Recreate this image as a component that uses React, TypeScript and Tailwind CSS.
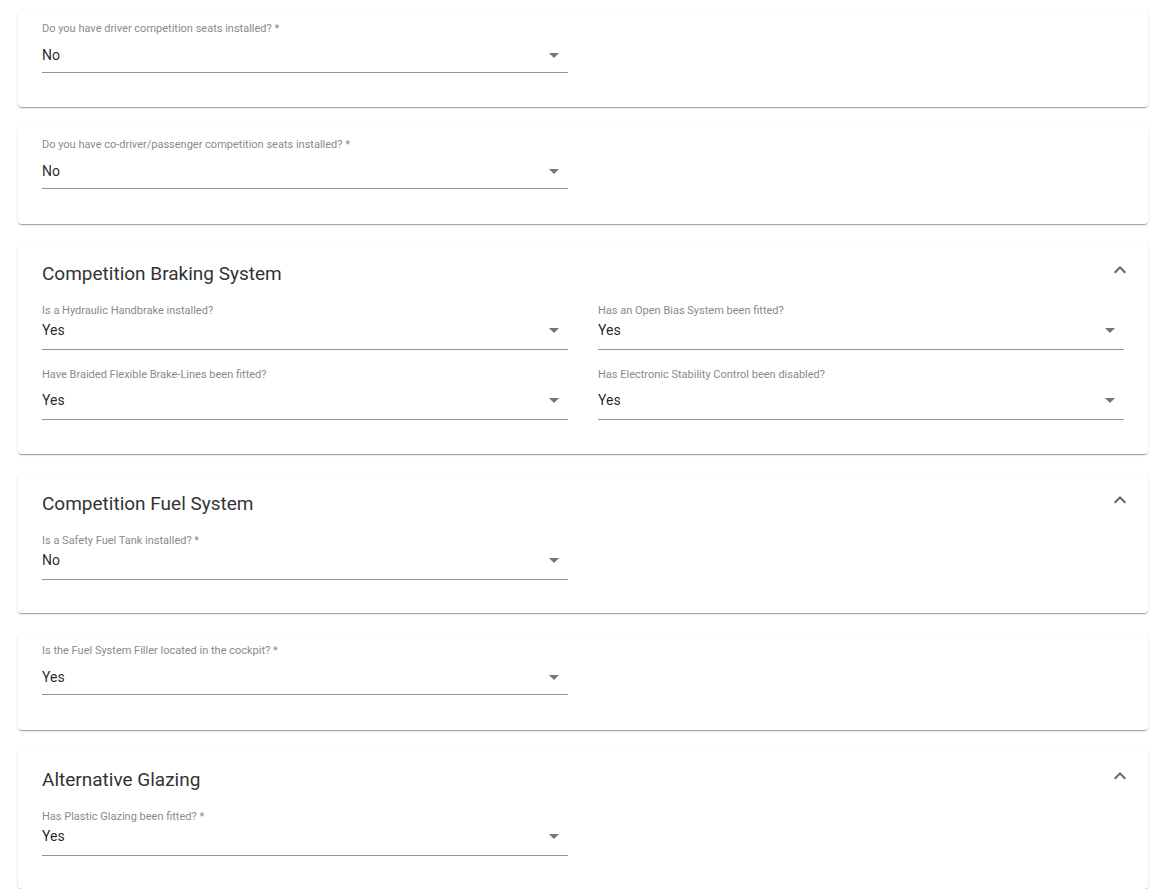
import type { ReactNode } from 'react'

type Field = { label: string; value: string }

const CARD_SHADOW =
  'shadow-[0px_2px_1px_-1px_rgba(0,0,0,0.2),0px_1px_1px_0px_rgba(0,0,0,0.14),0px_1px_3px_0px_rgba(0,0,0,0.12)]'

function ArrowDown(): JSX.Element {
  return (
    <svg viewBox="0 0 24 24" className="h-6 w-6 -my-[2px] mr-[2px] shrink-0 fill-[#757575]">
      <path d="M7 10l5 5 5-5z" />
    </svg>
  )
}

function ExpandLess(): JSX.Element {
  return (
    <svg viewBox="0 0 24 24" className="h-6 w-6 -mr-2 shrink-0 fill-[#616161]">
      <path d="M12 8l-6 6 1.41 1.41L12 10.83l4.59 4.58L18 14z" />
    </svg>
  )
}

// gap between label and value differs between sections, so it is passed in
function SelectField({ field, gap, boxed }: { field: Field; gap: string; boxed: string }): JSX.Element {
  return (
    <div className="flex flex-col">
      <label className="text-[11px] leading-[13px] text-[#8a8a8a] whitespace-nowrap">{field.label}</label>
      <div className={`${gap} ${boxed} flex items-center justify-between border-b border-[#949494]`}>
        <span className="text-[14px] leading-[20px] text-[rgba(0,0,0,0.87)]">{field.value}</span>
        <ArrowDown />
      </div>
    </div>
  )
}

function Card({
  title,
  first,
  pad,
  children
}: {
  title?: string
  first?: boolean
  pad?: string
  children: ReactNode
}): JSX.Element {
  const padding = pad ?? (title ? 'pt-[14px] pb-[33px]' : first ? 'pt-[11px] pb-[34px]' : 'pt-[11px] pb-[35px]')
  return (
    <section className={`bg-white rounded ${CARD_SHADOW} px-6 ${padding}`}>
      {title && (
        <div className="flex items-start justify-between mb-[16px]">
          <h2 className="mt-[2px] text-[19px] leading-[28px] text-[#333333]">{title}</h2>
          <ExpandLess />
        </div>
      )}
      {children}
    </section>
  )
}

function FieldGrid({ fields, sectioned }: { fields: Field[]; sectioned?: boolean }): JSX.Element {
  return (
    <div className="grid grid-cols-2 gap-x-[30px] gap-y-[18px]">
      {fields.map((f, i) => (
        <SelectField
          key={f.label}
          field={f}
          gap={sectioned ? (i < 2 ? 'mt-[3px]' : 'mt-[9px]') : 'mt-[10px]'}
          boxed={sectioned ? 'h-[30px] pb-[9px]' : 'h-[28px] pb-[7px]'}
        />
      ))}
    </div>
  )
}

export default function App(): JSX.Element {
  return (
    <div className="min-h-screen bg-white pt-[11px] pl-[18px] pr-[5px] pb-6 font-['Roboto','Liberation_Sans',sans-serif]">
      <div className="flex flex-col gap-5">
        <Card first>
          <FieldGrid fields={[{ label: 'Do you have driver competition seats installed? *', value: 'No' }]} />
        </Card>

        <Card>
          <FieldGrid
            fields={[{ label: 'Do you have co-driver/passenger competition seats installed? *', value: 'No' }]}
          />
        </Card>

        <Card title="Competition Braking System" pad="pt-[14px] pb-[34px]">
          <FieldGrid
            sectioned
            fields={[
              { label: 'Is a Hydraulic Handbrake installed?', value: 'Yes' },
              { label: 'Has an Open Bias System been fitted?', value: 'Yes' },
              { label: 'Have Braided Flexible Brake-Lines been fitted?', value: 'Yes' },
              { label: 'Has Electronic Stability Control been disabled?', value: 'Yes' }
            ]}
          />
        </Card>

        <Card title="Competition Fuel System">
          <FieldGrid sectioned fields={[{ label: 'Is a Safety Fuel Tank installed? *', value: 'No' }]} />
        </Card>

        <Card>
          <FieldGrid fields={[{ label: 'Is the Fuel System Filler located in the cockpit? *', value: 'Yes' }]} />
        </Card>

        <Card title="Alternative Glazing">
          <FieldGrid sectioned fields={[{ label: 'Has Plastic Glazing been fitted? *', value: 'Yes' }]} />
        </Card>
      </div>
    </div>
  )
}
